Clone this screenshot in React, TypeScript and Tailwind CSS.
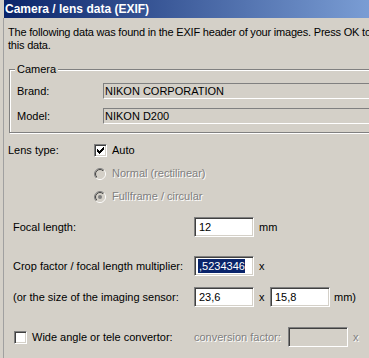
import React from "react";

const sunken =
  "border border-t-[#808080] border-l-[#808080] border-b-white border-r-white shadow-[inset_1px_1px_0_#404040,inset_-1px_-1px_0_#d4d0c8]";

function Check({ checked }: { checked: boolean }) {
  return (
    <div className={`w-[13px] h-[13px] shrink-0 bg-white ${sunken} relative`}>
      {checked && (
        <svg width="13" height="13" viewBox="0 0 13 13" className="absolute left-[-1px] top-[-1px]" shapeRendering="crispEdges">
          <rect x="3" y="5" width="1" height="3" fill="#000" />
          <rect x="4" y="6" width="1" height="3" fill="#000" />
          <rect x="5" y="7" width="1" height="3" fill="#000" />
          <rect x="6" y="6" width="1" height="3" fill="#000" />
          <rect x="7" y="5" width="1" height="3" fill="#000" />
          <rect x="8" y="4" width="1" height="3" fill="#000" />
          <rect x="9" y="3" width="1" height="3" fill="#000" />
        </svg>
      )}
    </div>
  );
}

function Radio({ checked, id }: { checked: boolean; id: string }) {
  return (
    <svg width="12" height="12" viewBox="0 0 12 12" className="shrink-0">
      <defs>
        <linearGradient id={`o${id}`} x1="0" y1="0" x2="1" y2="1">
          <stop offset="0.5" stopColor="#808080" />
          <stop offset="0.5" stopColor="#ffffff" />
        </linearGradient>
        <linearGradient id={`i${id}`} x1="0" y1="0" x2="1" y2="1">
          <stop offset="0.5" stopColor="#404040" />
          <stop offset="0.5" stopColor="#d4d0c8" />
        </linearGradient>
      </defs>
      <circle cx="6" cy="6" r="5.5" fill="none" stroke={`url(#o${id})`} strokeWidth="1" />
      <circle cx="6" cy="6" r="4.5" fill="#d4d0c8" stroke={`url(#i${id})`} strokeWidth="1" />
      {checked && <circle cx="6" cy="6" r="2" fill="#808080" />}
    </svg>
  );
}

const dis = "text-[#808080] [text-shadow:1px_1px_0_#ffffff]";

export default function App() {
  return (
    <div className="w-[369px] h-[358px] overflow-hidden bg-[#d4d0c8] flex font-['Liberation_Sans',Arial,sans-serif] text-[11px] text-black">
      <div className="w-[4px] shrink-0" />
      <div className="flex-1 flex flex-col min-w-0">
        <div className="h-[18px] shrink-0 bg-[linear-gradient(to_right,#0a246a,#7a9dd4)] flex items-center pl-[1px]">
          <span className="text-white font-bold text-[12px] leading-[18px] whitespace-nowrap">
            Camera / lens data (EXIF)
          </span>
        </div>
        <div className="flex-1 flex flex-col border-l border-[#a0a0a0] ml-[-1px]">
          <div className="mt-[8px] pl-[4px] leading-[13px] whitespace-nowrap tracking-[-0.2px]">
            <div>The following data was found in the EXIF header of your images. Press OK to import</div>
            <div>this data.</div>
          </div>

          <div className="relative ml-[5px] mt-[17px] w-[380px] h-[64px] shrink-0 border border-[#808080] shadow-[1px_1px_0_#ffffff,inset_1px_1px_0_#ffffff] flex flex-col pt-[13px]">
            <span className="absolute left-[5px] top-[-7px] px-[2px] bg-[#d4d0c8] leading-[13px]">Camera</span>
            <div className="flex items-center h-[16px]">
              <span className="w-[93px] pl-[7px] shrink-0">Brand:</span>
              <div className="flex-1 h-[16px] border-t border-l border-t-[#808080] border-l-[#808080] border-b border-b-white pl-[1px] leading-[14px] whitespace-nowrap">
                NIKON CORPORATION
              </div>
            </div>
            <div className="flex items-center h-[16px] mt-[9px]">
              <span className="w-[93px] pl-[7px] shrink-0">Model:</span>
              <div className="flex-1 h-[16px] border-t border-l border-t-[#808080] border-l-[#808080] border-b border-b-white pl-[1px] leading-[14px] whitespace-nowrap">
                NIKON D200
              </div>
            </div>
          </div>

          <div className="mt-[6px] flex flex-col">
            <div className="h-[23px] flex items-center">
              <span className="w-[90px] pl-[4px] shrink-0">Lens type:</span>
              <Check checked={true} />
              <span className="ml-[5px]">Auto</span>
            </div>
            <div className="h-[23px] flex items-center pl-[90px]">
              <Radio checked={false} id="a" />
              <span className={`ml-[6px] ${dis}`}>Normal (rectilinear)</span>
            </div>
            <div className="h-[23px] flex items-center pl-[90px]">
              <Radio checked={true} id="b" />
              <span className={`ml-[6px] ${dis}`}>Fullframe / circular</span>
            </div>
          </div>

          <div className="mt-[9px] h-[20px] flex items-center">
            <span className="w-[190px] pl-[9px] shrink-0">Focal length:</span>
            <div className={`w-[60px] h-[20px] shrink-0 bg-white ${sunken} flex items-center pl-[4px]`}>12</div>
            <span className="ml-[5px]">mm</span>
          </div>

          <div className="mt-[19px] h-[20px] flex items-center">
            <span className="w-[190px] pl-[9px] shrink-0 whitespace-nowrap">Crop factor / focal length multiplier:</span>
            <div className={`w-[60px] h-[20px] shrink-0 bg-white ${sunken} flex items-center pl-[3px] overflow-hidden`}>
              <span className="bg-[#0a246a] text-white leading-[14px] pl-[1px]">,5234346</span>
            </div>
            <span className="ml-[5px]">x</span>
          </div>

          <div className="mt-[11px] h-[20px] flex items-center">
            <span className="w-[190px] pl-[9px] shrink-0 whitespace-nowrap">(or the size of the imaging sensor:</span>
            <div className={`w-[60px] h-[20px] shrink-0 bg-white ${sunken} flex items-center pl-[4px]`}>23,6</div>
            <span className="w-[16px] pl-[5px] shrink-0">x</span>
            <div className={`w-[60px] h-[20px] shrink-0 bg-white ${sunken} flex items-center pl-[4px]`}>15,8</div>
            <span className="ml-[4px]">mm)</span>
          </div>

          <div className="mt-[20px] h-[20px] flex items-center">
            <div className="w-[190px] pl-[10px] shrink-0 flex items-center">
              <Check checked={false} />
              <span className="ml-[5px] whitespace-nowrap">Wide angle or tele convertor:</span>
            </div>
            <span className={`w-[94px] shrink-0 whitespace-nowrap ${dis}`}>conversion factor:</span>
            <div className={`w-[60px] h-[20px] shrink-0 bg-[#d4d0c8] ${sunken}`} />
            <span className={`ml-[5px] ${dis}`}>x</span>
          </div>
        </div>
      </div>
    </div>
  );
}
